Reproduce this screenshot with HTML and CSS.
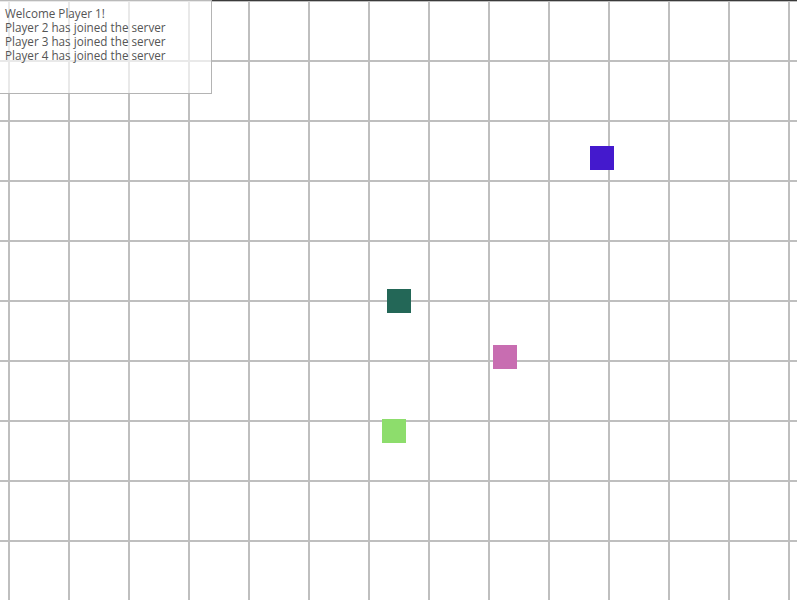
FILE: index.html
```html
<!DOCTYPE html>
<html>
<head>
<meta charset="utf-8">
<link rel="stylesheet" href="styles.css">
</head>
<body>
<div class="stage">
  <div class="player p-teal" style="left:387px;top:289px"></div>
  <div class="player p-blue" style="left:590px;top:146px"></div>
  <div class="player p-pink" style="left:493px;top:345px"></div>
  <div class="player p-green" style="left:382px;top:419px"></div>
  <div class="log">
    <div class="log-line">Welcome Player 1!</div>
    <div class="log-line">Player 2 has joined the server</div>
    <div class="log-line">Player 3 has joined the server</div>
    <div class="log-line">Player 4 has joined the server</div>
  </div>
</div>
</body>
</html>
```
FILE: styles.css
```css
html, body {
  margin: 0;
  padding: 0;
  background: #fff;
}
.stage {
  position: relative;
  width: 797px;
  height: 600px;
  overflow: hidden;
  background-color: #fff;
  background-image:
    linear-gradient(to bottom, #3a3a3a 1px, transparent 1px),
    linear-gradient(to right, #bfbfbf 2px, transparent 2px),
    linear-gradient(to bottom, #bfbfbf 2px, transparent 2px);
  background-size: 100% 100%, 60px 60px, 60px 60px;
  background-repeat: no-repeat, repeat, repeat;
  background-position: 0 0, 8px 0, 0 0;
}
.player {
  position: absolute;
  width: 24px;
  height: 24px;
}
.p-teal { background: #236757; }
.p-blue { background: #4419cd; }
.p-pink { background: #c86db1; }
.p-green { background: #8ddd6c; }
.log {
  position: absolute;
  left: -1px;
  top: -1px;
  width: 213px;
  height: 95px;
  background: rgba(255, 255, 255, 0.65);
  border: 1px solid #b4b4b4;
  border-top-color: #3a3a3a;
  box-sizing: border-box;
  padding: 6px 0 0 5px;
  font-family: "Open Sans", "DejaVu Sans", sans-serif;
  font-size: 11.7px;
  line-height: 14px;
  color: #555;
}
```
